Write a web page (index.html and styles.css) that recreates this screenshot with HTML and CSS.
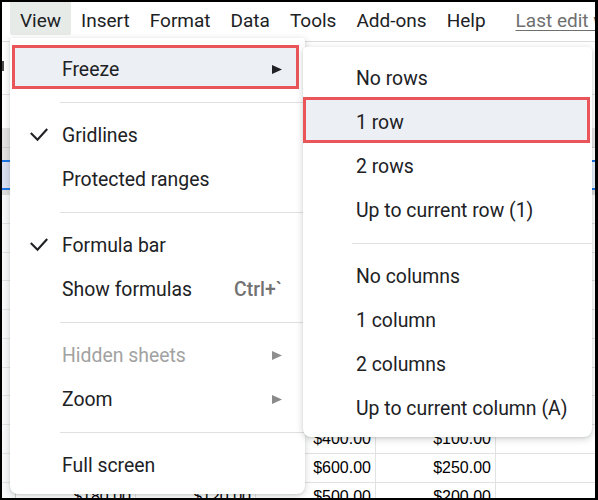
FILE: index.html
```html
<!DOCTYPE html>
<html>
<head>
<meta charset="utf-8">
<link rel="stylesheet" href="styles.css">
</head>
<body>
<div class="frame">
  <div class="menubar">
    <span class="mb-item active">View</span>
    <span class="mb-item">Insert</span>
    <span class="mb-item">Format</span>
    <span class="mb-item">Data</span>
    <span class="mb-item">Tools</span>
    <span class="mb-item">Add-ons</span>
    <span class="mb-item">Help</span>
    <span class="last-edit">Last edit was seconds ago</span>
  </div>
  <div class="toolbar"><span class="tb-frag"></span></div>
  <div class="formulabar"></div>
  <div class="grid">
    <div class="row colhead"><div class="rh"></div><div class="c"></div><div class="c"></div><div class="c"></div><div class="c"></div><div class="c"></div></div>
    <div class="row blank"><div class="rh"></div><div class="c"></div><div class="c"></div><div class="c"></div><div class="c"></div><div class="c"></div></div>
    <div class="row selrow"><div class="rh"></div><div class="c"></div><div class="c"></div><div class="c"></div><div class="c"></div><div class="c"></div></div>
    <div class="freezebar"></div>
    <div class="row data"><div class="rh"></div><div class="c"></div><div class="c"></div><div class="c"></div><div class="c"></div><div class="c"></div></div>
    <div class="row data"><div class="rh"></div><div class="c"></div><div class="c"></div><div class="c"></div><div class="c"></div><div class="c"></div></div>
    <div class="row data"><div class="rh"></div><div class="c"></div><div class="c"></div><div class="c"></div><div class="c"></div><div class="c"></div></div>
    <div class="row data"><div class="rh"></div><div class="c"></div><div class="c"></div><div class="c"></div><div class="c"></div><div class="c"></div></div>
    <div class="row data"><div class="rh"></div><div class="c"></div><div class="c"></div><div class="c"></div><div class="c"></div><div class="c"></div></div>
    <div class="row data"><div class="rh"></div><div class="c"></div><div class="c"></div><div class="c"></div><div class="c"></div><div class="c"></div></div>
    <div class="row data"><div class="rh"></div><div class="c"></div><div class="c"></div><div class="c"></div><div class="c"></div><div class="c"></div></div>
    <div class="row data"><div class="rh"></div><div class="c"></div><div class="c"></div><div class="c"></div><div class="c"></div><div class="c"></div></div>
    <div class="row data"><div class="rh"></div><div class="c"></div><div class="c"></div><div class="c">$400.00</div><div class="c">$100.00</div><div class="c"></div></div>
    <div class="row data"><div class="rh"></div><div class="c"></div><div class="c"></div><div class="c">$600.00</div><div class="c">$250.00</div><div class="c"></div></div>
    <div class="row data"><div class="rh"></div><div class="c">$180.00</div><div class="c">$120.00</div><div class="c">$500.00</div><div class="c">$200.00</div><div class="c"></div></div>
  </div>

  <div class="menu main-menu">
    <div class="item annotated box-main"><span class="slot"></span><span class="label">Freeze</span><svg class="arrow" width="10" height="9" viewBox="0 0 10 9"><polygon points="0,0 10,4.5 0,9" fill="#202124"/></svg></div>
    <div class="sep"></div>
    <div class="item"><span class="slot"><svg width="18" height="14" viewBox="0 0 18 14"><path d="M0.8 5 L7.5 11.8 L17.2 1" fill="none" stroke="#202124" stroke-width="2.1"/></svg></span><span class="label">Gridlines</span></div>
    <div class="item"><span class="slot"></span><span class="label">Protected ranges</span></div>
    <div class="sep"></div>
    <div class="item"><span class="slot"><svg width="18" height="14" viewBox="0 0 18 14"><path d="M0.8 5 L7.5 11.8 L17.2 1" fill="none" stroke="#202124" stroke-width="2.1"/></svg></span><span class="label">Formula bar</span></div>
    <div class="item"><span class="slot"></span><span class="label">Show formulas</span><span class="shortcut">Ctrl+`</span></div>
    <div class="sep"></div>
    <div class="item disabled"><span class="slot"></span><span class="label">Hidden sheets</span><svg class="arrow" width="10" height="9" viewBox="0 0 10 9"><polygon points="0,0 10,4.5 0,9" fill="#8f8f8f"/></svg></div>
    <div class="item"><span class="slot"></span><span class="label">Zoom</span><svg class="arrow" width="10" height="9" viewBox="0 0 10 9"><polygon points="0,0 10,4.5 0,9" fill="#8a8a8a"/></svg></div>
    <div class="sep"></div>
    <div class="item"><span class="slot"></span><span class="label">Full screen</span></div>
  </div>

  <div class="menu sub-menu">
    <div class="item"><span class="label">No rows</span></div>
    <div class="item annotated box-sub"><span class="label">1 row</span></div>
    <div class="item"><span class="label">2 rows</span></div>
    <div class="item"><span class="label">Up to current row (1)</span></div>
    <div class="sep"></div>
    <div class="item"><span class="label">No columns</span></div>
    <div class="item"><span class="label">1 column</span></div>
    <div class="item"><span class="label">2 columns</span></div>
    <div class="item"><span class="label">Up to current column (A)</span></div>
  </div>
</div>
</body>
</html>
```

FILE: styles.css
```css
html, body {
  margin: 0;
  padding: 0;
  background: #fff;
}
.frame {
  position: relative;
  width: 598px;
  height: 500px;
  box-sizing: border-box;
  border: 2px solid #000;
  border-right-width: 3px;
  overflow: hidden;
  background: #fff;
  font-family: Roboto, "Liberation Sans", sans-serif;
}

/* menu bar */
.menubar {
  height: 40px;
  box-sizing: border-box;
  border-bottom: 1px solid #dadce0;
  display: flex;
  align-items: flex-start;
  padding-left: 8px;
  white-space: nowrap;
  font-size: 19px;
  color: #202124;
}
.mb-item {
  height: 33px;
  box-sizing: border-box;
  padding: 4px 10px 0;
  line-height: 29px;
}
.mb-item.active {
  background: #e6ebe8;
  border-radius: 0 0 2px 2px;
}
.last-edit {
  margin-left: 20px;
  padding-top: 4px;
  line-height: 29px;
  color: #6f6f6f;
  text-decoration: underline;
  text-underline-offset: 3px;
}

/* toolbar + formula bar */
.toolbar {
  height: 53px;
  box-sizing: border-box;
  padding-top: 19px;
  border-bottom: 1px solid #e3e3e3;
}
.tb-frag {
  display: block;
  width: 2px;
  height: 10px;
  background: #4a4a4a;
}
.formulabar {
  height: 33px;
}

/* grid */
.grid {
  font-family: "Liberation Sans", Arial, sans-serif;
  font-size: 16px;
  color: #000;
}
.row {
  display: grid;
  grid-template-columns: 14px 120px 120px 120px 120px 120px;
  box-sizing: border-box;
}
.row .c {
  border-right: 1px solid #e2e2e2;
  text-align: right;
  padding-right: 4px;
  white-space: nowrap;
}
.row .rh {
  border-right: 1px solid #cfcfcf;
  background: #f8f9fa;
}
.colhead {
  height: 20px;
  background: #e8e8e8;
  border-bottom: 1px solid #cdcdcd;
}
.colhead .rh { background: #e2e2e2; }
.blank {
  height: 12px;
}
.blank .rh { background: #e2e2e2; }
.selrow {
  height: 30px;
  background: #e8f0fe;
  border-top: 2px solid #1a73e8;
  border-bottom: 2px solid #1a73e8;
}
.selrow .rh { background: #d9def0; }
.freezebar {
  height: 5px;
  background: #dcdcdc;
}
.data {
  height: 28.75px;
  border-bottom: 1px solid #e2e2e2;
  line-height: 27px;
}

/* menus */
.menu {
  position: absolute;
  background: #fff;
  box-shadow: 0 2px 6px 1px rgba(60, 64, 67, 0.18), 0 1px 2px rgba(60, 64, 67, 0.12);
  font-size: 19.4px;
  color: #202124;
  white-space: nowrap;
}
.main-menu {
  left: 8px;
  top: 36px;
  width: 295px;
  padding: 9px 0 7px;
  border-radius: 2px 2px 8px 8px;
  z-index: 2;
}
.sub-menu {
  left: 301px;
  top: 45px;
  width: 289px;
  padding: 9px 0 7px;
  border-radius: 4px 4px 8px 8px;
  z-index: 3;
}
.item {
  position: relative;
  display: flex;
  align-items: center;
  height: 44px;
  box-sizing: border-box;
  padding-left: 20px;
  padding-right: 23px;
}
.sub-menu .item {
  padding-left: 53px;
}
.slot {
  width: 32px;
  display: flex;
  align-items: center;
  position: relative;
  z-index: 1;
}
.label {
  flex: 1;
  position: relative;
  z-index: 1;
}
.arrow {
  position: relative;
  z-index: 1;
}
.shortcut {
  position: relative;
  z-index: 1;
  color: #727272;
  font-weight: 500;
}
.disabled {
  color: #a2a2a2;
}
.sep {
  height: 1px;
  margin: 11px 0 10px 50px;
  background: #e0e0e0;
}
.sub-menu .sep {
  margin-left: 49px;
}
.annotated::before {
  content: "";
  position: absolute;
  border: 3px solid #ea555a;
  background: #eceff3;
  z-index: 0;
}
.box-main::before {
  top: -2px;
  bottom: 2px;
  left: 2px;
  right: 6px;
}
.box-sub::before {
  top: -3px;
  bottom: 1px;
  left: 0;
  right: 2px;
}
```
